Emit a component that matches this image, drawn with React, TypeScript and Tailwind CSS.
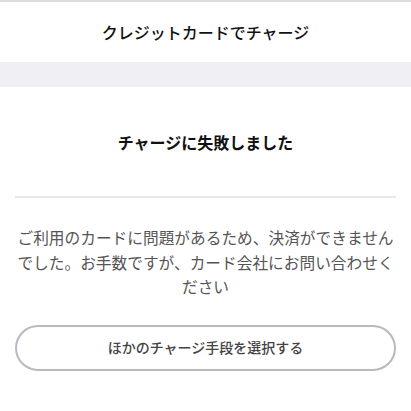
import React from "react";

export default function App() {
  return (
    <div
      className="w-[411px] h-[411px] bg-white overflow-hidden"
      style={{ fontFamily: '"Noto Sans CJK JP", "Noto Sans", sans-serif' }}
    >
      <div className="h-[2px] bg-[#dcdce1]" />
      <div className="h-[60px] flex items-center justify-center text-[16px] font-medium text-[#111]">
        クレジットカードでチャージ
      </div>
      <div className="h-[25px] bg-[#efeff4]" />
      <div className="px-[15px]">
        <div className="pt-[43px] h-[109px] text-center text-[16px] font-semibold leading-[24px] text-[#111]">
          チャージに失敗しました
        </div>
        <div className="h-[2px] bg-[#e6e6eb]" />
        <p className="pt-[28px] text-center text-[15.7px] leading-[24.5px] text-[#555]">
          ご利用のカードに問題があるため、決済ができませんでした。お手数ですが、カード会社にお問い合わせください
        </p>
        <button className="mt-[25px] w-full h-[46px] rounded-full border-2 border-[#b8b8c2] bg-white text-[14px] font-medium text-[#444]">
          ほかのチャージ手段を選択する
        </button>
      </div>
    </div>
  );
}
